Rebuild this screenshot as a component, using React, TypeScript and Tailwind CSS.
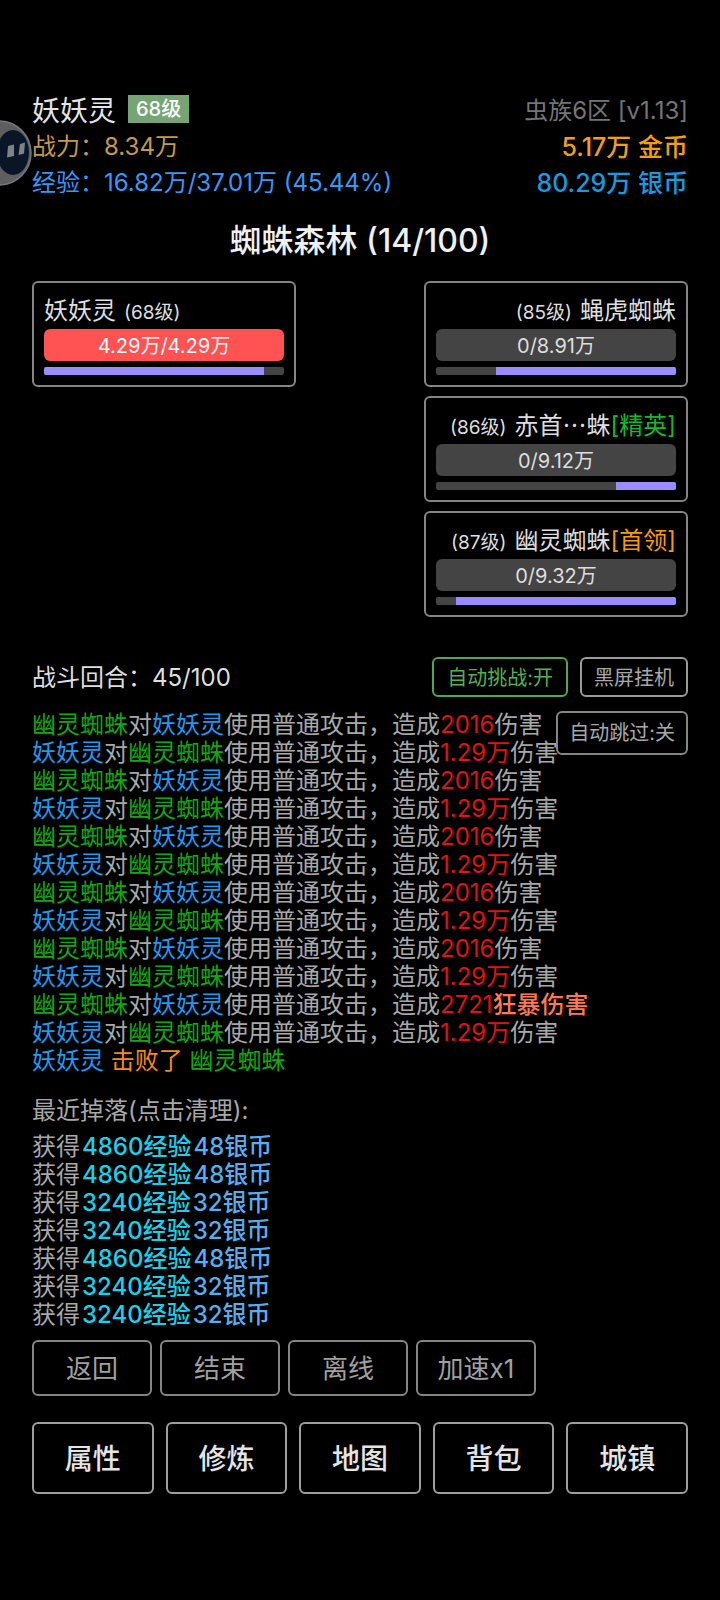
import React from 'react';
import clsx from 'clsx';

interface Fighter {
  name: React.ReactNode;
  level: number;
  hp: string;
  alive?: boolean;
  mp: number;
  tag?: string;
  tagClass?: string;
}

const PLAYER = '妖妖灵';
const BOSS = '幽灵蜘蛛';

const player: Fighter = { name: PLAYER, level: 68, hp: '4.29万/4.29万', alive: true, mp: 91.67 };

const enemies: Fighter[] = [
  { name: '蝇虎蜘蛛', level: 85, hp: '0/8.91万', mp: 75 },
  {
    name: (
      <>
        赤首<span className="font-['Noto_Sans_CJK_SC'] leading-none">…</span>蛛
      </>
    ),
    level: 86,
    hp: '0/9.12万',
    mp: 25,
    tag: '[精英]',
    tagClass: 'text-[#14b82c]',
  },
  { name: BOSS, level: 87, hp: '0/9.32万', mp: 91.67, tag: '[首领]', tagClass: 'text-[#f59a12]' },
];

const hits = [
  { byPlayer: false, damage: '2016' },
  { byPlayer: true, damage: '1.29万' },
  { byPlayer: false, damage: '2016' },
  { byPlayer: true, damage: '1.29万' },
  { byPlayer: false, damage: '2016' },
  { byPlayer: true, damage: '1.29万' },
  { byPlayer: false, damage: '2016' },
  { byPlayer: true, damage: '1.29万' },
  { byPlayer: false, damage: '2016' },
  { byPlayer: true, damage: '1.29万' },
  { byPlayer: false, damage: '2721', crit: true },
  { byPlayer: true, damage: '1.29万' },
];

const drops = [
  { exp: 4860, silver: 48 },
  { exp: 4860, silver: 48 },
  { exp: 3240, silver: 32 },
  { exp: 3240, silver: 32 },
  { exp: 4860, silver: 48 },
  { exp: 3240, silver: 32 },
  { exp: 3240, silver: 32 },
];

const actions = ['返回', '结束', '离线', '加速x1'];
const tabs = ['属性', '修炼', '地图', '背包', '城镇'];

const PlayerName = () => <span className="text-[#1e9af0]">{PLAYER}</span>;
const BossName = () => <span className="text-[#12a812]">{BOSS}</span>;

const FighterCard = ({ fighter, mirrored = false }: { fighter: Fighter; mirrored?: boolean }) => (
  <div className="rounded-md border-2 border-[#858585] p-2.5">
    <div
      className={clsx(
        'flex h-9 items-baseline leading-9 whitespace-nowrap text-[#dedede]',
        mirrored && 'flex-row-reverse'
      )}
    >
      <span>
        {fighter.name}
        {fighter.tag && <span className={fighter.tagClass}>{fighter.tag}</span>}
      </span>
      <span className="mx-2 text-[19px] leading-9">({fighter.level}级)</span>
    </div>
    <div
      className={clsx(
        'h-8 rounded-md pt-px text-center text-xl leading-8',
        fighter.alive ? 'bg-[#ff5252] text-white' : 'bg-[#444444] text-[#dedede]'
      )}
    >
      {fighter.hp}
    </div>
    <div
      className={clsx(
        'mt-1.5 flex h-2 overflow-hidden rounded-xs bg-[#444444]',
        mirrored && 'justify-end'
      )}
    >
      <div className="bg-[#9a8cff]" style={{ width: `${fighter.mp}%` }} />
    </div>
  </div>
);

const FloatingBall = () => (
  <button aria-label="悬浮球" className="absolute top-[120px] left-0">
    <svg width="33" height="68" viewBox="0 0 33 68">
      <circle cx="-1" cy="33" r="32" fill="#5e5e5e" stroke="#74777d" strokeWidth="1.5" />
      <ellipse cx="13" cy="32.5" rx="16" ry="22.5" fill="#0a1628" />
      <path d="M8 26l6-1.5v11.5l-7 1.5zM20 24l5-1.5-1 11-5.5 1.500z" fill="#7d838a" />
    </svg>
  </button>
);

export default function App() {
  return (
    <div
      lang="zh-CN"
      className="relative min-h-screen bg-black px-8 pt-[93px] pb-[106px] font-['Inter','Noto_Sans_CJK_SC',sans-serif] text-2xl text-[#a8a8a8]"
    >
      <FloatingBall />

      <header className="flex justify-between whitespace-nowrap">
        <div>
          <div className="flex h-9 items-center gap-3">
            <h1 className="text-[28px] leading-9 text-[#e4e4e4]">{PLAYER}</h1>
            <span className="mb-1 bg-[#74a573] px-2 text-xl leading-7 font-medium text-white">68级</span>
          </div>
          <div className="leading-9 text-[#c49a48]">战力：8.34万</div>
          <div className="leading-9 text-[#3898f8]">经验：16.82万/37.01万 (45.44%)</div>
        </div>
        <div className="text-right leading-9">
          <div className="text-[#757575]">虫族6区 [v1.13]</div>
          <div className="text-[25px] font-medium text-[#f0a012]">5.17万 金币</div>
          <div className="text-[25px] font-medium text-[#189ae0]">80.29万 银币</div>
        </div>
      </header>

      <h2 className="mt-5 text-center text-[32px] leading-10 font-medium text-[#f0f0f0]">
        蜘蛛森林 (14/100)
      </h2>

      <section className="mt-5 grid grid-cols-[264fr_128fr_264fr] items-start">
        <FighterCard fighter={player} />
        <div />
        <div className="grid gap-[9px]">
          {enemies.map((enemy) => (
            <FighterCard key={enemy.level} fighter={enemy} mirrored />
          ))}
        </div>
      </section>

      <div className="mt-10 flex h-10 items-center justify-between whitespace-nowrap">
        <div className="pt-0.5 text-[#dedede]">战斗回合：45/100</div>
        <div className="flex gap-3 text-xl">
          <button className="h-10 rounded-md border-2 border-[#52a552] px-[13px] pt-0.5 text-[#55b050]">
            自动挑战:开
          </button>
          <button className="h-10 rounded-md border-2 border-[#9a9a9a] px-3 pt-0.5">黑屏挂机</button>
        </div>
      </div>

      <section className="relative mt-3.5 leading-7 whitespace-nowrap">
        {hits.map((hit, i) => (
          <div key={i}>
            {hit.byPlayer ? <PlayerName /> : <BossName />}对
            {hit.byPlayer ? <BossName /> : <PlayerName />}
            使用普通攻击，造成<span className="text-[#e01212]">{hit.damage}</span>
            {hit.crit ? <span className="font-medium text-[#ff7a50]">狂暴伤害</span> : '伤害'}
          </div>
        ))}
        <div>
          <PlayerName /> <span className="text-[#f58a1a]">击败了</span> <BossName />
        </div>
        <button className="absolute top-0 right-0 h-11 rounded-md border-2 border-[#858585] px-[11px] text-xl">
          自动跳过:关
        </button>
      </section>

      <button className="mt-5 block leading-8">最近掉落(点击清理):</button>
      <ul className="mt-1.5 leading-7">
        {drops.map((drop, i) => (
          <li key={i} className="flex gap-0.5">
            <span>获得</span>
            <span className="font-medium text-[#1cd0ea]">{drop.exp}经验</span>
            <span className="font-medium text-[#56aef0]">{drop.silver}银币</span>
          </li>
        ))}
      </ul>

      <div className="mt-[11px] flex gap-2">
        {actions.map((label) => (
          <button
            key={label}
            className="h-14 w-[120px] rounded-md border-2 border-[#858585] pt-0.5 text-[26px] text-[#a0a0a0]"
          >
            {label}
          </button>
        ))}
      </div>

      <nav className="mt-[26px] grid grid-cols-5 gap-3">
        {tabs.map((label) => (
          <button
            key={label}
            className="h-[72px] rounded-md border-2 border-[#9e9e9e] pt-1 text-[28px] font-medium text-[#e4e4e4]"
          >
            {label}
          </button>
        ))}
      </nav>
    </div>
  );
}
